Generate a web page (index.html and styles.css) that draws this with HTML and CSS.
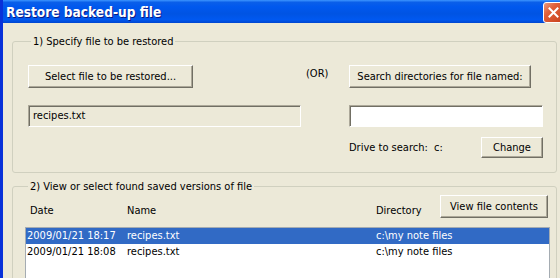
FILE: index.html
```html
<!DOCTYPE html>
<html lang="en">
<head>
    <meta charset="UTF-8">
    <title>Restore backed-up file</title>
    <link rel="stylesheet" href="styles.css">
</head>
<body>

    <div class="window">

        <!-- Title bar -->
        <div class="titlebar">
            <span class="title">Restore backed-up file</span>
            <button class="close" type="button" aria-label="Close">
                <svg width="11" height="11" viewBox="0 0 11 11">
                    <path d="M1.5 1.5 L9.5 9.5 M9.5 1.5 L1.5 9.5" stroke="#fff" stroke-width="2" stroke-linecap="square"/>
                </svg>
            </button>
        </div>

        <div class="body">

            <!-- Step 1 -->
            <fieldset class="group group-file">
                <legend>1) Specify file to be restored</legend>

                <div class="pick-grid">
                    <button type="button" class="btn btn-select">Select file to be restored...</button>
                    <span class="or">(OR)</span>
                    <button type="button" class="btn btn-search">Search directories for file named:</button>

                    <div class="field field-readonly">recipes.txt</div>
                    <span></span>
                    <input type="text" class="field field-input">

                    <span></span>
                    <span></span>
                    <div class="drive-row">
                        <span class="drive-label">Drive to search:&nbsp;&nbsp;c:</span>
                        <button type="button" class="btn btn-change">Change</button>
                    </div>
                </div>
            </fieldset>

            <!-- Step 2 -->
            <fieldset class="group group-versions">
                <legend>2) View or select found saved versions of file</legend>

                <div class="list-head">
                    <span class="col-date">Date</span>
                    <span class="col-name">Name</span>
                    <span class="col-dir">Directory</span>
                    <button type="button" class="btn btn-view">View file contents</button>
                </div>

                <div class="listbox">
                    <div class="row selected">
                        <span class="col-date">2009/01/21 18:17</span>
                        <span class="col-name">recipes.txt</span>
                        <span class="col-dir">c:\my note files</span>
                    </div>
                    <div class="row">
                        <span class="col-date">2009/01/21 18:08</span>
                        <span class="col-name">recipes.txt</span>
                        <span class="col-dir">c:\my note files</span>
                    </div>
                </div>
            </fieldset>

        </div>
    </div>

</body>
</html>
```

FILE: styles.css
```css
body {
    margin: 0;
    padding: 0;
    background-color: #ECE9D8;
    font-family: "DejaVu Sans Condensed", "DejaVu Sans", sans-serif;
    font-size: 11px;
    color: #000;
    overflow: hidden;
}

/* Window frame */
.window {
    width: 560px;
    height: 278px;
    overflow: hidden;
    background-color: #ECE9D8;
    border-left: 3px solid #0831D9;
    box-sizing: border-box;
}

/* Title bar */
.titlebar {
    height: 23px;
    margin-left: -3px;
    display: flex;
    align-items: center;
    justify-content: space-between;
    background: linear-gradient(#3D95FF 0%, #0A5FE9 10%, #0058EE 30%, #0054E3 60%, #0058F0 85%, #0046D0 100%);
}

.title {
    padding-left: 6px;
    color: #fff;
    font-weight: bold;
    font-size: 13.6px;
    text-shadow: 1px 1px #0A1883;
}

.close {
    width: 21px;
    height: 21px;
    margin-top: 1px;
    margin-right: -4px;
    padding: 0;
    border: 1px solid #fff;
    border-radius: 3px;
    background: linear-gradient(135deg, #E89A80 0%, #E0603A 35%, #C8411B 100%);
    display: flex;
    align-items: center;
    justify-content: center;
}

/* Content */
.body {
    padding: 12px 0 0 9px;
}

.group {
    margin: 0;
    width: 545px;
    box-sizing: border-box;
    border: 1px solid #D0D0BF;
    border-radius: 3px;
}

.group legend {
    margin-left: 3px;
    padding: 0 2px;
    line-height: 13px;
}

/* Step 1 */
.group-file {
    padding: 17px 0 14px 15px;
}

.pick-grid {
    display: grid;
    grid-template-columns: 273px 48px 194px;
    grid-template-rows: 23px 22px 14px;
    row-gap: 17px;
}

.or {
    padding: 2px 0 0 5px;
}

.btn {
    font-family: inherit;
    font-size: 11px;
    color: #000;
    background-color: #ECE9D8;
    border: 1px solid;
    border-color: #fff #716F64 #716F64 #fff;
    box-shadow: inset -1px -1px #ACA899;
    padding: 0;
    height: 23px;
}

.btn-select {
    width: 165px;
}

.btn-search {
    width: 182px;
}

.field {
    height: 22px;
    box-sizing: border-box;
    border: 1px solid;
    border-color: #ACA899 #fff #fff #ACA899;
    box-shadow: inset 1px 1px #716F64;
    font-family: inherit;
    font-size: 11px;
    padding: 0 0 0 4px;
    margin: 0;
}

.field-readonly {
    line-height: 20px;
}

.field-input {
    width: 194px;
    background-color: #fff;
    outline: none;
}

.drive-row {
    height: 21px;
    margin-top: -7px;
    display: flex;
    align-items: center;
    justify-content: space-between;
}

.btn-change {
    width: 62px;
    height: 21px;
}

/* Step 2 */
.group-versions {
    margin-top: 7px;
    padding: 2px 6px 20px 12px;
}

.list-head {
    display: flex;
    align-items: flex-end;
    height: 23px;
}

.list-head span {
    padding-bottom: 1px;
}

.btn-view {
    width: 108px;
    margin-left: auto;
    margin-right: 2px;
    align-self: flex-start;
}

.col-date {
    width: 97px;
    padding-left: 5px;
}

.col-name {
    width: 249px;
}

.listbox {
    margin-top: 9px;
    height: 60px;
    border: 1px solid #A5ACB2;
    background-color: #fff;
}

.row {
    display: flex;
    height: 16px;
    line-height: 16px;
}

.row .col-date {
    width: 100px;
    padding-left: 1px;
}

.row.selected {
    background-color: #316AC5;
    color: #fff;
}
```
